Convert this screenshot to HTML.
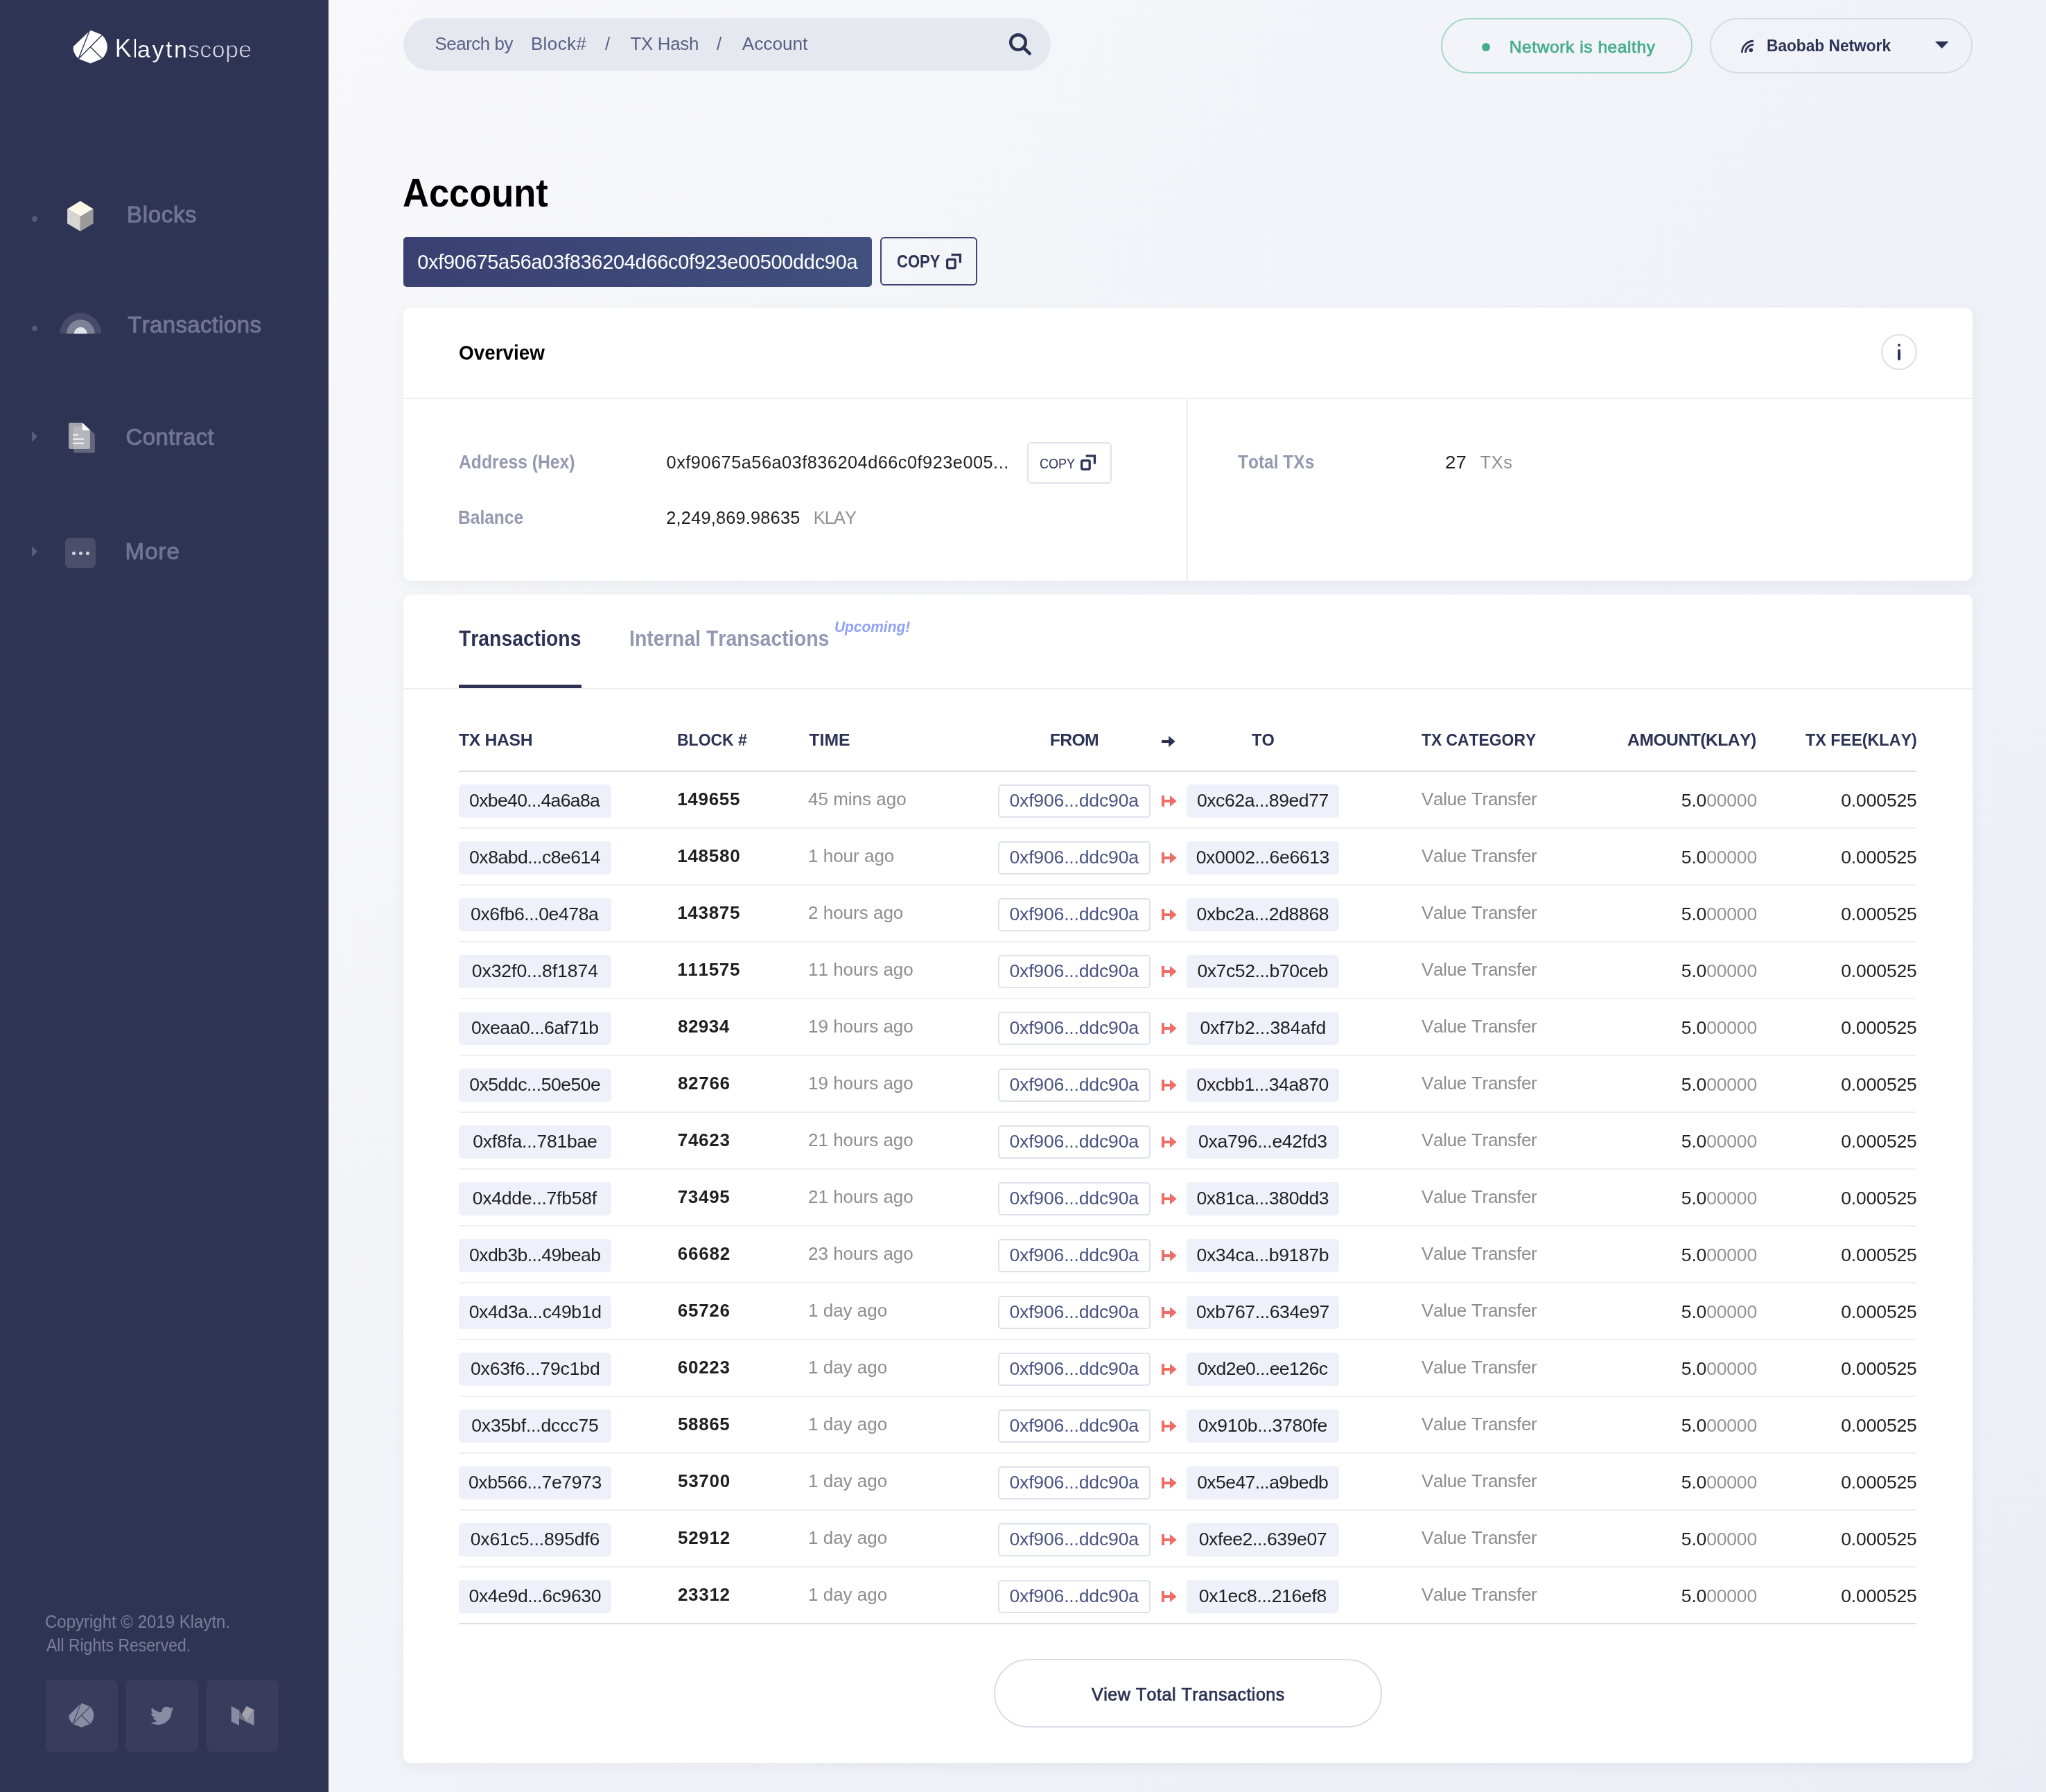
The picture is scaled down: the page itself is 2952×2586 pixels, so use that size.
<!DOCTYPE html>
<html><head><meta charset="utf-8"><title>Klaytnscope Account</title>
<style>
html,body{margin:0;padding:0;width:2952px;height:2586px;overflow:hidden;}
body{position:relative;font-family:"Liberation Sans",sans-serif;font-kerning:none;}
.t{position:absolute;white-space:nowrap;line-height:0;transform-origin:0 0;}
.r{position:absolute;box-sizing:border-box;}
svg{position:absolute;overflow:visible;}
</style></head><body>
<div id="root" style="position:absolute;left:0;top:0;width:2952px;height:2586px;will-change:transform;">
<div class="r" style="left:474px;top:0px;width:2478px;height:2586px;background:linear-gradient(to bottom,rgba(200,205,230,0) 0%,rgba(200,205,230,0.12) 100%),linear-gradient(to right,#f8f8fa 0%,#f0f2f8 100%);"></div>
<div class="r" style="left:0px;top:0px;width:474px;height:2586px;background:#2f3455;"></div>
<svg style="left:0;top:0" width="2952" height="2586"><path d="M105.90,67.10 L129.60,44.30 L131.50,43.90 L146.50,50.10 L148.20,51.40 Q161.60,67.40 147.90,84.20 L146.50,84.90 L130.50,91.60 L113.70,84.90 L112.70,84.20 Q104.10,75.40 105.90,67.10 Z" fill="#ffffff"/><line x1="129.60" y1="43.00" x2="113.00" y2="85.50" stroke="#2f3455" stroke-width="1.40"/><line x1="148.00" y1="50.00" x2="112.80" y2="85.30" stroke="#2f3455" stroke-width="1.40"/><line x1="130.50" y1="67.80" x2="147.80" y2="85.10" stroke="#2f3455" stroke-width="1.40"/></svg>
<div class="t" style="left:165.75px;top:70.03px;font-size:36.00px;font-weight:400;color:#ffffff;-webkit-text-stroke:0.3px #2f3455;">K</div>
<div class="r" style="left:193.6px;top:56.0px;width:2.4000000000000057px;height:26.5px;background:#ffffff;"></div>
<div class="t" style="left:198.06px;top:70.72px;font-size:34.00px;font-weight:400;color:#ffffff;letter-spacing:2.563px;-webkit-text-stroke:0.2px #2f3455;">aytn</div>
<div class="t" style="left:270.95px;top:70.72px;font-size:34.00px;font-weight:400;color:#dadce8;letter-spacing:0.382px;-webkit-text-stroke:0.8px #2f3455;">scope</div>
<div class="r" style="left:46px;top:311.7px;width:8px;height:8.0px;background:#565a78;border-radius:50%;"></div>
<div class="r" style="left:46px;top:470.0px;width:8px;height:8.0px;background:#565a78;border-radius:50%;"></div>
<svg style="left:0;top:0" width="60" height="2586"><path d="M46,622 L54,630 L46,638 Z" fill="#595d7b"/></svg>
<svg style="left:0;top:0" width="60" height="2586"><path d="M46,788 L54,796 L46,804 Z" fill="#595d7b"/></svg>
<svg style="left:0;top:0" width="200" height="400"><path d="M115.9,289.9 L134.6,301.4 L115.9,312.5 L97.1,301.4 Z" fill="#fdf8e8"/><path d="M97.1,301.4 L115.9,312.5 L115.9,333.8 L97.1,322.6 Z" fill="#d8d6d2"/><path d="M134.6,301.4 L115.9,312.5 L115.9,333.8 L134.6,322.6 Z" fill="#9b9b9b"/></svg>
<svg style="left:0;top:0" width="200" height="500"><path d="M86.3,481.6 A30,30 0 0 1 146.3,481.6 Z" fill="#474b69"/><path d="M96,481.6 A20.3,20.3 0 0 1 136.6,481.6 Z" fill="#7d8096"/><path d="M106.8,481.6 A9.5,9.5 0 0 1 125.8,481.6 Z" fill="#e4e4e8"/></svg>
<svg style="left:0;top:0" width="200" height="700"><defs><clipPath id="cA"><path d="M101.1,609.9 L118.8,609.9 L129.9,620.9 L129.9,645.9 Q129.9,647.9 127.9,647.9 L101.1,647.9 Q99.1,647.9 99.1,645.9 L99.1,611.9 Q99.1,609.9 101.1,609.9 Z"/></clipPath></defs><path d="M106.1,617.4 Q106.1,615.4 108.1,615.4 L125.5,615.4 L136.9,626.8 L136.9,651.6 Q136.9,653.6 134.9,653.6 L108.1,653.6 Q106.1,653.6 106.1,651.6 Z" fill="#63667c"/><path d="M101.1,609.9 L118.8,609.9 L129.9,620.9 L129.9,645.9 Q129.9,647.9 127.9,647.9 L101.1,647.9 Q99.1,647.9 99.1,645.9 L99.1,611.9 Q99.1,609.9 101.1,609.9 Z" fill="#a3a5b0"/><path d="M106.1,617.4 Q106.1,615.4 108.1,615.4 L125.5,615.4 L136.9,626.8 L136.9,651.6 Q136.9,653.6 134.9,653.6 L108.1,653.6 Q106.1,653.6 106.1,651.6 Z" fill="#b5b6bb" clip-path="url(#cA)"/><path d="M118.8,609.9 L129.9,620.9 L118.8,620.9 Z" fill="#ffffff"/><rect x="105.1" y="626.7" width="7.9" height="1.8" fill="#ffffff"/><rect x="105.1" y="632.7" width="15.9" height="1.8" fill="#ffffff"/><rect x="105.1" y="638.8" width="15.9" height="1.8" fill="#ffffff"/></svg>
<div class="r" style="left:94.2px;top:776px;width:43.8px;height:43.700000000000045px;background:#4b4e6b;border-radius:7px;"></div>
<div class="r" style="left:103.9px;top:795.6999999999999px;width:5.199999999999989px;height:5.2000000000000455px;background:#d4d4dc;border-radius:50%;"></div>
<div class="r" style="left:113.80000000000001px;top:795.6999999999999px;width:5.199999999999989px;height:5.2000000000000455px;background:#d4d4dc;border-radius:50%;"></div>
<div class="r" style="left:123.80000000000001px;top:795.6999999999999px;width:5.199999999999989px;height:5.2000000000000455px;background:#d4d4dc;border-radius:50%;"></div>
<div class="t" style="left:182.99px;top:310.47px;font-size:33.00px;font-weight:400;color:#717592;letter-spacing:0.681px;-webkit-text-stroke:1.0px #717592;">Blocks</div>
<div class="t" style="left:184.26px;top:468.67px;font-size:33.00px;font-weight:400;color:#717592;letter-spacing:0.338px;-webkit-text-stroke:1.0px #717592;">Transactions</div>
<div class="t" style="left:181.62px;top:630.57px;font-size:33.00px;font-weight:400;color:#717592;letter-spacing:0.343px;-webkit-text-stroke:1.0px #717592;">Contract</div>
<div class="t" style="left:180.59px;top:796.47px;font-size:33.00px;font-weight:400;color:#717592;letter-spacing:1.063px;-webkit-text-stroke:1.0px #717592;">More</div>
<div class="t" style="left:65.38px;top:2339.64px;font-size:25.00px;font-weight:400;color:#7b7f98;transform:scaleX(0.9598);">Copyright © 2019 Klaytn.</div>
<div class="t" style="left:66.56px;top:2373.64px;font-size:25.00px;font-weight:400;color:#7b7f98;transform:scaleX(0.9190);">All Rights Reserved.</div>
<div class="r" style="left:66px;top:2424px;width:104px;height:104px;background:#393c5d;border-radius:7px;"></div>
<div class="r" style="left:182px;top:2424px;width:104px;height:104px;background:#393c5d;border-radius:7px;"></div>
<div class="r" style="left:298px;top:2424px;width:104px;height:104px;background:#393c5d;border-radius:7px;"></div>
<svg style="left:0;top:0" width="2952" height="2586"><path d="M99.70,2474.94 L117.00,2458.29 L118.39,2458.00 L129.34,2462.53 L130.58,2463.47 Q140.36,2475.16 130.36,2487.42 L129.34,2487.93 L117.66,2492.82 L105.39,2487.93 L104.66,2487.42 Q98.39,2480.99 99.70,2474.94 Z" fill="#8a8ca3"/><line x1="117.00" y1="2457.34" x2="104.88" y2="2488.37" stroke="#393c5d" stroke-width="1.09"/><line x1="130.43" y1="2462.45" x2="104.74" y2="2488.22" stroke="#393c5d" stroke-width="1.09"/><line x1="117.66" y1="2475.45" x2="130.29" y2="2488.08" stroke="#393c5d" stroke-width="1.09"/></svg>
<svg style="left:217px;top:2462.9px" width="34" height="25.7" viewBox="0 2.3 24 19.3" preserveAspectRatio="none"><path fill="#8a8ca3" d="M23.953 4.57a10 10 0 01-2.825.775 4.958 4.958 0 002.163-2.723c-.951.555-2.005.959-3.127 1.184a4.92 4.92 0 00-8.384 4.482C7.69 8.095 4.067 6.13 1.64 3.162a4.822 4.822 0 00-.666 2.475c0 1.71.87 3.213 2.188 4.096a4.904 4.904 0 01-2.228-.616v.06a4.923 4.923 0 003.946 4.827 4.996 4.996 0 01-2.212.085 4.936 4.936 0 004.604 3.417 9.867 9.867 0 01-6.102 2.105c-.39 0-.779-.023-1.17-.067a13.995 13.995 0 007.557 2.209c9.053 0 13.998-7.496 13.998-13.985 0-.21 0-.42-.015-.63A9.935 9.935 0 0024 4.59z"/></svg>
<svg style="left:0;top:0" width="400" height="2586"><path d="M345,2479.9 L355,2484.5 L366.6,2467.4 L366.6,2490 Z" fill="#8d8fa6"/><path d="M348.8,2473.7 L355.8,2462 L366.6,2467.4 L355,2484.5 Z" fill="#a3a3ab"/><path d="M345,2467.9 L355,2484.5 L345,2479.9 Z" fill="#707289"/><path d="M333.8,2462 L345,2467.9 L345,2489.9 L333.8,2484.5 Z" fill="#8a8ba2"/></svg>
<div class="r" style="left:582px;top:26px;width:934px;height:76px;background:#e6e8f0;border-radius:38px;"></div>
<div class="t" style="left:627.43px;top:62.54px;font-size:25.86px;font-weight:400;color:#5a5f86;letter-spacing:-0.424px;">Search by</div>
<div class="t" style="left:765.88px;top:62.54px;font-size:25.86px;font-weight:400;color:#5a5f86;letter-spacing:0.468px;">Block#</div>
<div class="t" style="left:873.00px;top:62.54px;font-size:25.86px;font-weight:400;color:#5a5f86;">/</div>
<div class="t" style="left:909.42px;top:62.54px;font-size:25.86px;font-weight:400;color:#5a5f86;letter-spacing:-0.288px;">TX Hash</div>
<div class="t" style="left:1034.00px;top:62.54px;font-size:25.86px;font-weight:400;color:#5a5f86;">/</div>
<div class="t" style="left:1070.85px;top:62.64px;font-size:26.14px;font-weight:400;color:#5a5f86;letter-spacing:0.014px;">Account</div>
<svg style="left:0;top:0" width="1600" height="120"><circle cx="1469" cy="61" r="10.8" fill="none" stroke="#2c3254" stroke-width="4.4"/><line x1="1477" y1="69" x2="1485.6" y2="77.4" stroke="#2c3254" stroke-width="4.6" stroke-linecap="round"/></svg>
<div class="r" style="left:2078.5px;top:26px;width:363.5px;height:80px;border:2px solid #a3d8c4;border-radius:40px;"></div>
<div class="r" style="left:2138px;top:62.2px;width:12px;height:12.0px;background:#45ae88;border-radius:50%;"></div>
<div class="t" style="left:2177.79px;top:67.71px;font-size:24.50px;font-weight:400;color:#45ae88;letter-spacing:0.588px;-webkit-text-stroke:0.75px #45ae88;">Network is healthy</div>
<div class="r" style="left:2466.5px;top:26px;width:379.0px;height:80px;border:2px solid #d9dbe4;border-radius:40px;"></div>
<svg style="left:0;top:0" width="2952" height="120"><circle cx="2526.3" cy="72.3" r="2.8" fill="#2c3254"/><path d="M2513.35,75.9 A16.65,16.65 0 0 1 2530,59.25" fill="none" stroke="#2c3254" stroke-width="2.8"/><path d="M2518.45,75.9 A11.55,11.55 0 0 1 2530,64.35" fill="none" stroke="#2c3254" stroke-width="2.8"/><path d="M2791.8,59.8 L2811.7,59.8 L2801.75,70 Z" fill="#2c3254"/></svg>
<div class="t" style="left:2549.08px;top:65.64px;font-size:24.43px;font-weight:700;color:#2c3254;transform:scaleX(0.9292);">Baobab Network</div>
<div class="t" style="left:581.19px;top:278.10px;font-size:57.14px;font-weight:700;color:#000000;transform:scaleX(0.9181);">Account</div>
<div class="r" style="left:582px;top:342px;width:676px;height:72px;background:linear-gradient(90deg,#3a4172 0%,#41507e 100%);border-radius:5px;"></div>
<div class="t" style="left:602.27px;top:378.00px;font-size:28.86px;font-weight:400;color:#ffffff;letter-spacing:-0.241px;">0xf90675a56a03f836204d66c0f923e00500ddc90a</div>
<div class="r" style="left:1270px;top:342px;width:140px;height:70px;border:2px solid #3d4470;border-radius:6px;"></div>
<div class="t" style="left:1294.10px;top:377.34px;font-size:25.00px;font-weight:700;color:#2c3254;transform:scaleX(0.8816);">COPY</div>
<svg style="left:0;top:0" width="2952" height="2586"><g transform="translate(1365,365) scale(1.0)" fill="none" stroke="#2c3254" stroke-width="3.3"><rect x="1.65" y="9.45" width="11.5" height="12.4" rx="1.5"/><path d="M7.6,2.65 L20.4,2.65 L20.4,14.2" stroke-linecap="butt"/></g></svg>
<div class="r" style="left:582px;top:444px;width:2264px;height:394px;background:#ffffff;border-radius:10px;box-shadow:0 5px 18px rgba(45,55,100,0.055);"></div>
<div class="r" style="left:582px;top:574px;width:2264px;height:2px;background:#ededf1;"></div>
<div class="r" style="left:1712px;top:576px;width:2px;height:262px;background:#ededf1;"></div>
<div class="t" style="left:661.86px;top:508.50px;font-size:29.43px;font-weight:700;color:#000000;transform:scaleX(0.9466);">Overview</div>
<div class="r" style="left:2714px;top:482px;width:52px;height:52px;border:2px solid #dedee6;border-radius:50%;"></div>
<div class="r" style="left:2738px;top:496px;width:4px;height:4px;background:#2c3254;border-radius:50%;"></div>
<div class="r" style="left:2738px;top:504px;width:4px;height:16px;background:#2c3254;border-radius:2px;"></div>
<div class="t" style="left:661.58px;top:666.89px;font-size:26.86px;font-weight:700;color:#9498b1;transform:scaleX(0.9202);">Address (Hex)</div>
<div class="t" style="left:661.36px;top:746.99px;font-size:26.86px;font-weight:700;color:#9498b1;transform:scaleX(0.9143);">Balance</div>
<div class="t" style="left:961.61px;top:666.94px;font-size:25.29px;font-weight:400;color:#1f1f1f;letter-spacing:0.512px;">0xf90675a56a03f836204d66c0f923e005...</div>
<div class="t" style="left:961.33px;top:746.74px;font-size:25.29px;font-weight:400;color:#1f1f1f;letter-spacing:0.222px;">2,249,869.98635</div>
<div class="t" style="left:1173.63px;top:746.74px;font-size:25.29px;font-weight:400;color:#8f8f8f;letter-spacing:-0.810px;">KLAY</div>
<div class="r" style="left:1482px;top:638px;width:122px;height:60px;border:2px solid #e0e3ed;border-radius:6px;"></div>
<div class="t" style="left:1499.98px;top:668.72px;font-size:20.14px;font-weight:400;color:#2c3254;transform:scaleX(0.8954);">COPY</div>
<svg style="left:0;top:0" width="2952" height="2586"><g transform="translate(1559,655.2) scale(1.0)" fill="none" stroke="#2c3254" stroke-width="3.3"><rect x="1.65" y="9.45" width="11.5" height="12.4" rx="1.5"/><path d="M7.6,2.65 L20.4,2.65 L20.4,14.2" stroke-linecap="butt"/></g></svg>
<div class="t" style="left:1785.72px;top:666.89px;font-size:26.86px;font-weight:700;color:#9498b1;transform:scaleX(0.9124);">Total TXs</div>
<div class="t" style="left:2084.61px;top:666.94px;font-size:25.29px;font-weight:400;color:#1f1f1f;transform:scaleX(1.0945);">27</div>
<div class="t" style="left:2135.43px;top:666.94px;font-size:25.29px;font-weight:400;color:#8f8f8f;letter-spacing:0.764px;">TXs</div>
<div class="r" style="left:582px;top:858px;width:2264px;height:1686px;background:#ffffff;border-radius:10px;box-shadow:0 5px 18px rgba(45,55,100,0.055);"></div>
<div class="t" style="left:661.88px;top:921.21px;font-size:31.71px;font-weight:700;color:#2c3254;transform:scaleX(0.8941);">Transactions</div>
<div class="r" style="left:662px;top:987.5px;width:176.5px;height:5.0px;background:#2d3356;"></div>
<div class="r" style="left:582px;top:992.5px;width:2264px;height:2.0px;background:#eeeef2;"></div>
<div class="t" style="left:908.09px;top:921.21px;font-size:31.71px;font-weight:700;color:#9498b1;transform:scaleX(0.8997);">Internal Transactions</div>
<div class="t" style="left:1204.19px;top:904.08px;font-size:22.86px;font-weight:700;font-style:italic;color:#8ea2f6;transform:scaleX(0.9147);">Upcoming!</div>
<div class="t" style="left:662.02px;top:1067.74px;font-size:24.71px;font-weight:700;color:#2c3254;letter-spacing:-0.305px;">TX HASH</div>
<div class="t" style="left:976.76px;top:1067.74px;font-size:24.71px;font-weight:700;color:#2c3254;transform:scaleX(0.9302);">BLOCK #</div>
<div class="t" style="left:1167.32px;top:1067.74px;font-size:24.71px;font-weight:700;color:#2c3254;letter-spacing:0.070px;">TIME</div>
<div class="t" style="left:1514.80px;top:1067.74px;font-size:24.71px;font-weight:700;color:#2c3254;letter-spacing:-0.650px;">FROM</div>
<div class="t" style="left:1805.93px;top:1067.74px;font-size:24.71px;font-weight:700;color:#2c3254;transform:scaleX(0.9574);">TO</div>
<div class="t" style="left:2050.84px;top:1067.74px;font-size:24.71px;font-weight:700;color:#2c3254;transform:scaleX(0.9256);">TX CATEGORY</div>
<div class="t" style="left:2348.08px;top:1067.74px;font-size:24.71px;font-weight:700;color:#2c3254;letter-spacing:-0.540px;">AMOUNT(KLAY)</div>
<div class="t" style="left:2605.04px;top:1067.74px;font-size:24.71px;font-weight:700;color:#2c3254;transform:scaleX(0.9452);">TX FEE(KLAY)</div>
<svg style="left:0;top:0" width="2952" height="1200"><path d="M1676,1068.1 L1686.2,1068.1 L1686.2,1062 L1695.7,1070 L1686.2,1078 L1686.2,1071.9 L1676,1071.9 Z" fill="#2c3254"/></svg>
<div class="r" style="left:662px;top:1112px;width:2103px;height:2px;background:#dcdce5;"></div>
<svg style="left:0;top:0" width="2952" height="2586"><defs><path id="arr" d="M0,0 L4,0 L4,6 L12,6 L12,0 L21.7,8 L12,16 L12,10 L4,10 L4,16 L0,16 Z" fill="#ec6e67"/></defs><use href="#arr" x="1676" y="1148"/><use href="#arr" x="1676" y="1230"/><use href="#arr" x="1676" y="1312"/><use href="#arr" x="1676" y="1394"/><use href="#arr" x="1676" y="1476"/><use href="#arr" x="1676" y="1558"/><use href="#arr" x="1676" y="1640"/><use href="#arr" x="1676" y="1722"/><use href="#arr" x="1676" y="1804"/><use href="#arr" x="1676" y="1886"/><use href="#arr" x="1676" y="1968"/><use href="#arr" x="1676" y="2050"/><use href="#arr" x="1676" y="2132"/><use href="#arr" x="1676" y="2214"/><use href="#arr" x="1676" y="2296"/></svg>
<div class="r" style="left:662px;top:1132px;width:220px;height:48px;background:#eff1fa;border-radius:5px;"></div>
<div class="t" style="left:677.08px;top:1154.79px;font-size:26.57px;font-weight:400;color:#1f1f1f;letter-spacing:-0.657px;">0xbe40...4a6a8a</div>
<div class="t" style="left:977.16px;top:1152.99px;font-size:26.00px;font-weight:700;color:#1f1f1f;letter-spacing:0.700px;">149655</div>
<div class="t" style="left:1166.00px;top:1152.99px;font-size:26.00px;font-weight:400;color:#8e8e8e;">45 mins ago</div>
<div class="r" style="left:1440px;top:1132px;width:220px;height:48px;border:2px solid #dfe2ed;border-radius:5px;background:#fff;"></div>
<div class="t" style="left:1456.46px;top:1154.79px;font-size:26.57px;font-weight:400;color:#4b5382;letter-spacing:-0.176px;">0xf906...ddc90a</div>
<div class="r" style="left:1712px;top:1132px;width:220px;height:48px;background:#eff1fa;border-radius:5px;"></div>
<div class="t" style="left:1726.91px;top:1154.79px;font-size:26.57px;font-weight:400;color:#1f1f1f;letter-spacing:-0.429px;">0xc62a...89ed77</div>
<div class="t" style="left:2050.99px;top:1153.19px;font-size:26.00px;font-weight:400;color:#8c8c8c;letter-spacing:-0.291px;">Value Transfer</div>
<div class="t" style="left:2425.84px;top:1154.99px;font-size:26.57px;letter-spacing:-0.204px;color:#939393"><span style="color:#1f1f1f">5.0</span>00000</div>
<div class="t" style="left:2656.26px;top:1154.99px;font-size:26.57px;font-weight:400;color:#1f1f1f;letter-spacing:-0.168px;">0.000525</div>
<div class="r" style="left:662px;top:1194px;width:2103px;height:2px;background:#efeff3;"></div>
<div class="r" style="left:662px;top:1214px;width:220px;height:48px;background:#eff1fa;border-radius:5px;"></div>
<div class="t" style="left:677.08px;top:1236.79px;font-size:26.57px;font-weight:400;color:#1f1f1f;letter-spacing:-0.494px;">0x8abd...c8e614</div>
<div class="t" style="left:977.16px;top:1234.99px;font-size:26.00px;font-weight:700;color:#1f1f1f;letter-spacing:0.769px;">148580</div>
<div class="t" style="left:1166.00px;top:1234.99px;font-size:26.00px;font-weight:400;color:#8e8e8e;">1 hour ago</div>
<div class="r" style="left:1440px;top:1214px;width:220px;height:48px;border:2px solid #dfe2ed;border-radius:5px;background:#fff;"></div>
<div class="t" style="left:1456.46px;top:1236.79px;font-size:26.57px;font-weight:400;color:#4b5382;letter-spacing:-0.176px;">0xf906...ddc90a</div>
<div class="r" style="left:1712px;top:1214px;width:220px;height:48px;background:#eff1fa;border-radius:5px;"></div>
<div class="t" style="left:1725.71px;top:1236.79px;font-size:26.57px;font-weight:400;color:#1f1f1f;letter-spacing:-0.376px;">0x0002...6e6613</div>
<div class="t" style="left:2050.99px;top:1235.19px;font-size:26.00px;font-weight:400;color:#8c8c8c;letter-spacing:-0.291px;">Value Transfer</div>
<div class="t" style="left:2425.84px;top:1236.99px;font-size:26.57px;letter-spacing:-0.204px;color:#939393"><span style="color:#1f1f1f">5.0</span>00000</div>
<div class="t" style="left:2656.26px;top:1236.99px;font-size:26.57px;font-weight:400;color:#1f1f1f;letter-spacing:-0.168px;">0.000525</div>
<div class="r" style="left:662px;top:1276px;width:2103px;height:2px;background:#efeff3;"></div>
<div class="r" style="left:662px;top:1296px;width:220px;height:48px;background:#eff1fa;border-radius:5px;"></div>
<div class="t" style="left:679.08px;top:1318.79px;font-size:26.57px;font-weight:400;color:#1f1f1f;letter-spacing:-0.414px;">0x6fb6...0e478a</div>
<div class="t" style="left:977.16px;top:1316.99px;font-size:26.00px;font-weight:700;color:#1f1f1f;letter-spacing:0.700px;">143875</div>
<div class="t" style="left:1166.00px;top:1316.99px;font-size:26.00px;font-weight:400;color:#8e8e8e;">2 hours ago</div>
<div class="r" style="left:1440px;top:1296px;width:220px;height:48px;border:2px solid #dfe2ed;border-radius:5px;background:#fff;"></div>
<div class="t" style="left:1456.46px;top:1318.79px;font-size:26.57px;font-weight:400;color:#4b5382;letter-spacing:-0.176px;">0xf906...ddc90a</div>
<div class="r" style="left:1712px;top:1296px;width:220px;height:48px;background:#eff1fa;border-radius:5px;"></div>
<div class="t" style="left:1726.50px;top:1318.79px;font-size:26.57px;font-weight:400;color:#1f1f1f;letter-spacing:-0.384px;">0xbc2a...2d8868</div>
<div class="t" style="left:2050.99px;top:1317.19px;font-size:26.00px;font-weight:400;color:#8c8c8c;letter-spacing:-0.291px;">Value Transfer</div>
<div class="t" style="left:2425.84px;top:1318.99px;font-size:26.57px;letter-spacing:-0.204px;color:#939393"><span style="color:#1f1f1f">5.0</span>00000</div>
<div class="t" style="left:2656.26px;top:1318.99px;font-size:26.57px;font-weight:400;color:#1f1f1f;letter-spacing:-0.168px;">0.000525</div>
<div class="r" style="left:662px;top:1358px;width:2103px;height:2px;background:#efeff3;"></div>
<div class="r" style="left:662px;top:1378px;width:220px;height:48px;background:#eff1fa;border-radius:5px;"></div>
<div class="t" style="left:680.72px;top:1400.79px;font-size:26.57px;font-weight:400;color:#1f1f1f;letter-spacing:-0.064px;">0x32f0...8f1874</div>
<div class="t" style="left:977.16px;top:1398.99px;font-size:26.00px;font-weight:700;color:#1f1f1f;letter-spacing:0.700px;">111575</div>
<div class="t" style="left:1166.00px;top:1398.99px;font-size:26.00px;font-weight:400;color:#8e8e8e;">11 hours ago</div>
<div class="r" style="left:1440px;top:1378px;width:220px;height:48px;border:2px solid #dfe2ed;border-radius:5px;background:#fff;"></div>
<div class="t" style="left:1456.46px;top:1400.79px;font-size:26.57px;font-weight:400;color:#4b5382;letter-spacing:-0.176px;">0xf906...ddc90a</div>
<div class="r" style="left:1712px;top:1378px;width:220px;height:48px;background:#eff1fa;border-radius:5px;"></div>
<div class="t" style="left:1727.38px;top:1400.79px;font-size:26.57px;font-weight:400;color:#1f1f1f;letter-spacing:-0.406px;">0x7c52...b70ceb</div>
<div class="t" style="left:2050.99px;top:1399.19px;font-size:26.00px;font-weight:400;color:#8c8c8c;letter-spacing:-0.291px;">Value Transfer</div>
<div class="t" style="left:2425.84px;top:1400.99px;font-size:26.57px;letter-spacing:-0.204px;color:#939393"><span style="color:#1f1f1f">5.0</span>00000</div>
<div class="t" style="left:2656.26px;top:1400.99px;font-size:26.57px;font-weight:400;color:#1f1f1f;letter-spacing:-0.168px;">0.000525</div>
<div class="r" style="left:662px;top:1440px;width:2103px;height:2px;background:#efeff3;"></div>
<div class="r" style="left:662px;top:1460px;width:220px;height:48px;background:#eff1fa;border-radius:5px;"></div>
<div class="t" style="left:679.88px;top:1482.79px;font-size:26.57px;font-weight:400;color:#1f1f1f;letter-spacing:-0.449px;">0xeaa0...6af71b</div>
<div class="t" style="left:977.97px;top:1480.99px;font-size:26.00px;font-weight:700;color:#1f1f1f;letter-spacing:0.479px;">82934</div>
<div class="t" style="left:1166.00px;top:1480.99px;font-size:26.00px;font-weight:400;color:#8e8e8e;">19 hours ago</div>
<div class="r" style="left:1440px;top:1460px;width:220px;height:48px;border:2px solid #dfe2ed;border-radius:5px;background:#fff;"></div>
<div class="t" style="left:1456.46px;top:1482.79px;font-size:26.57px;font-weight:400;color:#4b5382;letter-spacing:-0.176px;">0xf906...ddc90a</div>
<div class="r" style="left:1712px;top:1460px;width:220px;height:48px;background:#eff1fa;border-radius:5px;"></div>
<div class="t" style="left:1731.44px;top:1482.79px;font-size:26.57px;font-weight:400;color:#1f1f1f;letter-spacing:-0.100px;">0xf7b2...384afd</div>
<div class="t" style="left:2050.99px;top:1481.19px;font-size:26.00px;font-weight:400;color:#8c8c8c;letter-spacing:-0.291px;">Value Transfer</div>
<div class="t" style="left:2425.84px;top:1482.99px;font-size:26.57px;letter-spacing:-0.204px;color:#939393"><span style="color:#1f1f1f">5.0</span>00000</div>
<div class="t" style="left:2656.26px;top:1482.99px;font-size:26.57px;font-weight:400;color:#1f1f1f;letter-spacing:-0.168px;">0.000525</div>
<div class="r" style="left:662px;top:1522px;width:2103px;height:2px;background:#efeff3;"></div>
<div class="r" style="left:662px;top:1542px;width:220px;height:48px;background:#eff1fa;border-radius:5px;"></div>
<div class="t" style="left:677.23px;top:1564.79px;font-size:26.57px;font-weight:400;color:#1f1f1f;letter-spacing:-0.487px;">0x5ddc...50e50e</div>
<div class="t" style="left:977.97px;top:1562.99px;font-size:26.00px;font-weight:700;color:#1f1f1f;letter-spacing:0.679px;">82766</div>
<div class="t" style="left:1166.00px;top:1562.99px;font-size:26.00px;font-weight:400;color:#8e8e8e;">19 hours ago</div>
<div class="r" style="left:1440px;top:1542px;width:220px;height:48px;border:2px solid #dfe2ed;border-radius:5px;background:#fff;"></div>
<div class="t" style="left:1456.46px;top:1564.79px;font-size:26.57px;font-weight:400;color:#4b5382;letter-spacing:-0.176px;">0xf906...ddc90a</div>
<div class="r" style="left:1712px;top:1542px;width:220px;height:48px;background:#eff1fa;border-radius:5px;"></div>
<div class="t" style="left:1726.54px;top:1564.79px;font-size:26.57px;font-weight:400;color:#1f1f1f;letter-spacing:-0.398px;">0xcbb1...34a870</div>
<div class="t" style="left:2050.99px;top:1563.19px;font-size:26.00px;font-weight:400;color:#8c8c8c;letter-spacing:-0.291px;">Value Transfer</div>
<div class="t" style="left:2425.84px;top:1564.99px;font-size:26.57px;letter-spacing:-0.204px;color:#939393"><span style="color:#1f1f1f">5.0</span>00000</div>
<div class="t" style="left:2656.26px;top:1564.99px;font-size:26.57px;font-weight:400;color:#1f1f1f;letter-spacing:-0.168px;">0.000525</div>
<div class="r" style="left:662px;top:1604px;width:2103px;height:2px;background:#efeff3;"></div>
<div class="r" style="left:662px;top:1624px;width:220px;height:48px;background:#eff1fa;border-radius:5px;"></div>
<div class="t" style="left:682.28px;top:1646.79px;font-size:26.57px;font-weight:400;color:#1f1f1f;letter-spacing:-0.259px;">0xf8fa...781bae</div>
<div class="t" style="left:977.68px;top:1644.99px;font-size:26.00px;font-weight:700;color:#1f1f1f;letter-spacing:0.752px;">74623</div>
<div class="t" style="left:1166.00px;top:1644.99px;font-size:26.00px;font-weight:400;color:#8e8e8e;">21 hours ago</div>
<div class="r" style="left:1440px;top:1624px;width:220px;height:48px;border:2px solid #dfe2ed;border-radius:5px;background:#fff;"></div>
<div class="t" style="left:1456.46px;top:1646.79px;font-size:26.57px;font-weight:400;color:#4b5382;letter-spacing:-0.176px;">0xf906...ddc90a</div>
<div class="r" style="left:1712px;top:1624px;width:220px;height:48px;background:#eff1fa;border-radius:5px;"></div>
<div class="t" style="left:1729.05px;top:1646.79px;font-size:26.57px;font-weight:400;color:#1f1f1f;letter-spacing:-0.325px;">0xa796...e42fd3</div>
<div class="t" style="left:2050.99px;top:1645.19px;font-size:26.00px;font-weight:400;color:#8c8c8c;letter-spacing:-0.291px;">Value Transfer</div>
<div class="t" style="left:2425.84px;top:1646.99px;font-size:26.57px;letter-spacing:-0.204px;color:#939393"><span style="color:#1f1f1f">5.0</span>00000</div>
<div class="t" style="left:2656.26px;top:1646.99px;font-size:26.57px;font-weight:400;color:#1f1f1f;letter-spacing:-0.168px;">0.000525</div>
<div class="r" style="left:662px;top:1686px;width:2103px;height:2px;background:#efeff3;"></div>
<div class="r" style="left:662px;top:1706px;width:220px;height:48px;background:#eff1fa;border-radius:5px;"></div>
<div class="t" style="left:681.76px;top:1728.79px;font-size:26.57px;font-weight:400;color:#1f1f1f;letter-spacing:-0.271px;">0x4dde...7fb58f</div>
<div class="t" style="left:977.68px;top:1726.99px;font-size:26.00px;font-weight:700;color:#1f1f1f;letter-spacing:0.698px;">73495</div>
<div class="t" style="left:1166.00px;top:1726.99px;font-size:26.00px;font-weight:400;color:#8e8e8e;">21 hours ago</div>
<div class="r" style="left:1440px;top:1706px;width:220px;height:48px;border:2px solid #dfe2ed;border-radius:5px;background:#fff;"></div>
<div class="t" style="left:1456.46px;top:1728.79px;font-size:26.57px;font-weight:400;color:#4b5382;letter-spacing:-0.176px;">0xf906...ddc90a</div>
<div class="r" style="left:1712px;top:1706px;width:220px;height:48px;background:#eff1fa;border-radius:5px;"></div>
<div class="t" style="left:1726.46px;top:1728.79px;font-size:26.57px;font-weight:400;color:#1f1f1f;letter-spacing:-0.378px;">0x81ca...380dd3</div>
<div class="t" style="left:2050.99px;top:1727.19px;font-size:26.00px;font-weight:400;color:#8c8c8c;letter-spacing:-0.291px;">Value Transfer</div>
<div class="t" style="left:2425.84px;top:1728.99px;font-size:26.57px;letter-spacing:-0.204px;color:#939393"><span style="color:#1f1f1f">5.0</span>00000</div>
<div class="t" style="left:2656.26px;top:1728.99px;font-size:26.57px;font-weight:400;color:#1f1f1f;letter-spacing:-0.168px;">0.000525</div>
<div class="r" style="left:662px;top:1768px;width:2103px;height:2px;background:#efeff3;"></div>
<div class="r" style="left:662px;top:1788px;width:220px;height:48px;background:#eff1fa;border-radius:5px;"></div>
<div class="t" style="left:676.96px;top:1810.79px;font-size:26.57px;font-weight:400;color:#1f1f1f;letter-spacing:-0.559px;">0xdb3b...49beab</div>
<div class="t" style="left:977.85px;top:1808.99px;font-size:26.00px;font-weight:700;color:#1f1f1f;letter-spacing:0.736px;">66682</div>
<div class="t" style="left:1166.00px;top:1808.99px;font-size:26.00px;font-weight:400;color:#8e8e8e;">23 hours ago</div>
<div class="r" style="left:1440px;top:1788px;width:220px;height:48px;border:2px solid #dfe2ed;border-radius:5px;background:#fff;"></div>
<div class="t" style="left:1456.46px;top:1810.79px;font-size:26.57px;font-weight:400;color:#4b5382;letter-spacing:-0.176px;">0xf906...ddc90a</div>
<div class="r" style="left:1712px;top:1788px;width:220px;height:48px;background:#eff1fa;border-radius:5px;"></div>
<div class="t" style="left:1726.54px;top:1810.79px;font-size:26.57px;font-weight:400;color:#1f1f1f;letter-spacing:-0.392px;">0x34ca...b9187b</div>
<div class="t" style="left:2050.99px;top:1809.19px;font-size:26.00px;font-weight:400;color:#8c8c8c;letter-spacing:-0.291px;">Value Transfer</div>
<div class="t" style="left:2425.84px;top:1810.99px;font-size:26.57px;letter-spacing:-0.204px;color:#939393"><span style="color:#1f1f1f">5.0</span>00000</div>
<div class="t" style="left:2656.26px;top:1810.99px;font-size:26.57px;font-weight:400;color:#1f1f1f;letter-spacing:-0.168px;">0.000525</div>
<div class="r" style="left:662px;top:1850px;width:2103px;height:2px;background:#efeff3;"></div>
<div class="r" style="left:662px;top:1870px;width:220px;height:48px;background:#eff1fa;border-radius:5px;"></div>
<div class="t" style="left:676.64px;top:1892.79px;font-size:26.57px;font-weight:400;color:#1f1f1f;letter-spacing:-0.364px;">0x4d3a...c49b1d</div>
<div class="t" style="left:977.85px;top:1890.99px;font-size:26.00px;font-weight:700;color:#1f1f1f;letter-spacing:0.710px;">65726</div>
<div class="t" style="left:1166.00px;top:1890.99px;font-size:26.00px;font-weight:400;color:#8e8e8e;">1 day ago</div>
<div class="r" style="left:1440px;top:1870px;width:220px;height:48px;border:2px solid #dfe2ed;border-radius:5px;background:#fff;"></div>
<div class="t" style="left:1456.46px;top:1892.79px;font-size:26.57px;font-weight:400;color:#4b5382;letter-spacing:-0.176px;">0xf906...ddc90a</div>
<div class="r" style="left:1712px;top:1870px;width:220px;height:48px;background:#eff1fa;border-radius:5px;"></div>
<div class="t" style="left:1725.88px;top:1892.79px;font-size:26.57px;font-weight:400;color:#1f1f1f;letter-spacing:-0.390px;">0xb767...634e97</div>
<div class="t" style="left:2050.99px;top:1891.19px;font-size:26.00px;font-weight:400;color:#8c8c8c;letter-spacing:-0.291px;">Value Transfer</div>
<div class="t" style="left:2425.84px;top:1892.99px;font-size:26.57px;letter-spacing:-0.204px;color:#939393"><span style="color:#1f1f1f">5.0</span>00000</div>
<div class="t" style="left:2656.26px;top:1892.99px;font-size:26.57px;font-weight:400;color:#1f1f1f;letter-spacing:-0.168px;">0.000525</div>
<div class="r" style="left:662px;top:1932px;width:2103px;height:2px;background:#efeff3;"></div>
<div class="r" style="left:662px;top:1952px;width:220px;height:48px;background:#eff1fa;border-radius:5px;"></div>
<div class="t" style="left:678.90px;top:1974.79px;font-size:26.57px;font-weight:400;color:#1f1f1f;letter-spacing:-0.159px;">0x63f6...79c1bd</div>
<div class="t" style="left:977.85px;top:1972.99px;font-size:26.00px;font-weight:700;color:#1f1f1f;letter-spacing:0.710px;">60223</div>
<div class="t" style="left:1166.00px;top:1972.99px;font-size:26.00px;font-weight:400;color:#8e8e8e;">1 day ago</div>
<div class="r" style="left:1440px;top:1952px;width:220px;height:48px;border:2px solid #dfe2ed;border-radius:5px;background:#fff;"></div>
<div class="t" style="left:1456.46px;top:1974.79px;font-size:26.57px;font-weight:400;color:#4b5382;letter-spacing:-0.176px;">0xf906...ddc90a</div>
<div class="r" style="left:1712px;top:1952px;width:220px;height:48px;background:#eff1fa;border-radius:5px;"></div>
<div class="t" style="left:1727.67px;top:1974.79px;font-size:26.57px;font-weight:400;color:#1f1f1f;letter-spacing:-0.584px;">0xd2e0...ee126c</div>
<div class="t" style="left:2050.99px;top:1973.19px;font-size:26.00px;font-weight:400;color:#8c8c8c;letter-spacing:-0.291px;">Value Transfer</div>
<div class="t" style="left:2425.84px;top:1974.99px;font-size:26.57px;letter-spacing:-0.204px;color:#939393"><span style="color:#1f1f1f">5.0</span>00000</div>
<div class="t" style="left:2656.26px;top:1974.99px;font-size:26.57px;font-weight:400;color:#1f1f1f;letter-spacing:-0.168px;">0.000525</div>
<div class="r" style="left:662px;top:2014px;width:2103px;height:2px;background:#efeff3;"></div>
<div class="r" style="left:662px;top:2034px;width:220px;height:48px;background:#eff1fa;border-radius:5px;"></div>
<div class="t" style="left:680.22px;top:2056.79px;font-size:26.57px;font-weight:400;color:#1f1f1f;letter-spacing:-0.177px;">0x35bf...dccc75</div>
<div class="t" style="left:978.00px;top:2054.99px;font-size:26.00px;font-weight:700;color:#1f1f1f;letter-spacing:0.618px;">58865</div>
<div class="t" style="left:1166.00px;top:2054.99px;font-size:26.00px;font-weight:400;color:#8e8e8e;">1 day ago</div>
<div class="r" style="left:1440px;top:2034px;width:220px;height:48px;border:2px solid #dfe2ed;border-radius:5px;background:#fff;"></div>
<div class="t" style="left:1456.46px;top:2056.79px;font-size:26.57px;font-weight:400;color:#4b5382;letter-spacing:-0.176px;">0xf906...ddc90a</div>
<div class="r" style="left:1712px;top:2034px;width:220px;height:48px;background:#eff1fa;border-radius:5px;"></div>
<div class="t" style="left:1728.68px;top:2056.79px;font-size:26.57px;font-weight:400;color:#1f1f1f;letter-spacing:-0.273px;">0x910b...3780fe</div>
<div class="t" style="left:2050.99px;top:2055.19px;font-size:26.00px;font-weight:400;color:#8c8c8c;letter-spacing:-0.291px;">Value Transfer</div>
<div class="t" style="left:2425.84px;top:2056.99px;font-size:26.57px;letter-spacing:-0.204px;color:#939393"><span style="color:#1f1f1f">5.0</span>00000</div>
<div class="t" style="left:2656.26px;top:2056.99px;font-size:26.57px;font-weight:400;color:#1f1f1f;letter-spacing:-0.168px;">0.000525</div>
<div class="r" style="left:662px;top:2096px;width:2103px;height:2px;background:#efeff3;"></div>
<div class="r" style="left:662px;top:2116px;width:220px;height:48px;background:#eff1fa;border-radius:5px;"></div>
<div class="t" style="left:675.88px;top:2138.79px;font-size:26.57px;font-weight:400;color:#1f1f1f;letter-spacing:-0.402px;">0xb566...7e7973</div>
<div class="t" style="left:978.00px;top:2136.99px;font-size:26.00px;font-weight:700;color:#1f1f1f;letter-spacing:0.704px;">53700</div>
<div class="t" style="left:1166.00px;top:2136.99px;font-size:26.00px;font-weight:400;color:#8e8e8e;">1 day ago</div>
<div class="r" style="left:1440px;top:2116px;width:220px;height:48px;border:2px solid #dfe2ed;border-radius:5px;background:#fff;"></div>
<div class="t" style="left:1456.46px;top:2138.79px;font-size:26.57px;font-weight:400;color:#4b5382;letter-spacing:-0.176px;">0xf906...ddc90a</div>
<div class="r" style="left:1712px;top:2116px;width:220px;height:48px;background:#eff1fa;border-radius:5px;"></div>
<div class="t" style="left:1727.19px;top:2138.79px;font-size:26.57px;font-weight:400;color:#1f1f1f;letter-spacing:-0.591px;">0x5e47...a9bedb</div>
<div class="t" style="left:2050.99px;top:2137.19px;font-size:26.00px;font-weight:400;color:#8c8c8c;letter-spacing:-0.291px;">Value Transfer</div>
<div class="t" style="left:2425.84px;top:2138.99px;font-size:26.57px;letter-spacing:-0.204px;color:#939393"><span style="color:#1f1f1f">5.0</span>00000</div>
<div class="t" style="left:2656.26px;top:2138.99px;font-size:26.57px;font-weight:400;color:#1f1f1f;letter-spacing:-0.168px;">0.000525</div>
<div class="r" style="left:662px;top:2178px;width:2103px;height:2px;background:#efeff3;"></div>
<div class="r" style="left:662px;top:2198px;width:220px;height:48px;background:#eff1fa;border-radius:5px;"></div>
<div class="t" style="left:678.72px;top:2220.79px;font-size:26.57px;font-weight:400;color:#1f1f1f;letter-spacing:-0.172px;">0x61c5...895df6</div>
<div class="t" style="left:978.00px;top:2218.99px;font-size:26.00px;font-weight:700;color:#1f1f1f;letter-spacing:0.698px;">52912</div>
<div class="t" style="left:1166.00px;top:2218.99px;font-size:26.00px;font-weight:400;color:#8e8e8e;">1 day ago</div>
<div class="r" style="left:1440px;top:2198px;width:220px;height:48px;border:2px solid #dfe2ed;border-radius:5px;background:#fff;"></div>
<div class="t" style="left:1456.46px;top:2220.79px;font-size:26.57px;font-weight:400;color:#4b5382;letter-spacing:-0.176px;">0xf906...ddc90a</div>
<div class="r" style="left:1712px;top:2198px;width:220px;height:48px;background:#eff1fa;border-radius:5px;"></div>
<div class="t" style="left:1729.67px;top:2220.79px;font-size:26.57px;font-weight:400;color:#1f1f1f;letter-spacing:-0.403px;">0xfee2...639e07</div>
<div class="t" style="left:2050.99px;top:2219.19px;font-size:26.00px;font-weight:400;color:#8c8c8c;letter-spacing:-0.291px;">Value Transfer</div>
<div class="t" style="left:2425.84px;top:2220.99px;font-size:26.57px;letter-spacing:-0.204px;color:#939393"><span style="color:#1f1f1f">5.0</span>00000</div>
<div class="t" style="left:2656.26px;top:2220.99px;font-size:26.57px;font-weight:400;color:#1f1f1f;letter-spacing:-0.168px;">0.000525</div>
<div class="r" style="left:662px;top:2260px;width:2103px;height:2px;background:#efeff3;"></div>
<div class="r" style="left:662px;top:2280px;width:220px;height:48px;background:#eff1fa;border-radius:5px;"></div>
<div class="t" style="left:676.51px;top:2302.79px;font-size:26.57px;font-weight:400;color:#1f1f1f;letter-spacing:-0.393px;">0x4e9d...6c9630</div>
<div class="t" style="left:977.90px;top:2300.99px;font-size:26.00px;font-weight:700;color:#1f1f1f;letter-spacing:0.723px;">23312</div>
<div class="t" style="left:1166.00px;top:2300.99px;font-size:26.00px;font-weight:400;color:#8e8e8e;">1 day ago</div>
<div class="r" style="left:1440px;top:2280px;width:220px;height:48px;border:2px solid #dfe2ed;border-radius:5px;background:#fff;"></div>
<div class="t" style="left:1456.46px;top:2302.79px;font-size:26.57px;font-weight:400;color:#4b5382;letter-spacing:-0.176px;">0xf906...ddc90a</div>
<div class="r" style="left:1712px;top:2280px;width:220px;height:48px;background:#eff1fa;border-radius:5px;"></div>
<div class="t" style="left:1729.75px;top:2302.79px;font-size:26.57px;font-weight:400;color:#1f1f1f;letter-spacing:-0.320px;">0x1ec8...216ef8</div>
<div class="t" style="left:2050.99px;top:2301.19px;font-size:26.00px;font-weight:400;color:#8c8c8c;letter-spacing:-0.291px;">Value Transfer</div>
<div class="t" style="left:2425.84px;top:2302.99px;font-size:26.57px;letter-spacing:-0.204px;color:#939393"><span style="color:#1f1f1f">5.0</span>00000</div>
<div class="t" style="left:2656.26px;top:2302.99px;font-size:26.57px;font-weight:400;color:#1f1f1f;letter-spacing:-0.168px;">0.000525</div>
<div class="r" style="left:662px;top:2342px;width:2103px;height:2px;background:#dcdce5;"></div>
<div class="r" style="left:1434px;top:2394px;width:560px;height:99px;border:2px solid #dcdce6;border-radius:50px;"></div>
<div class="t" style="left:1575.09px;top:2444.94px;font-size:25.00px;font-weight:400;color:#2c3254;letter-spacing:0.520px;-webkit-text-stroke:0.75px #2c3254;">View Total Transactions</div>
</div>
</body></html>
